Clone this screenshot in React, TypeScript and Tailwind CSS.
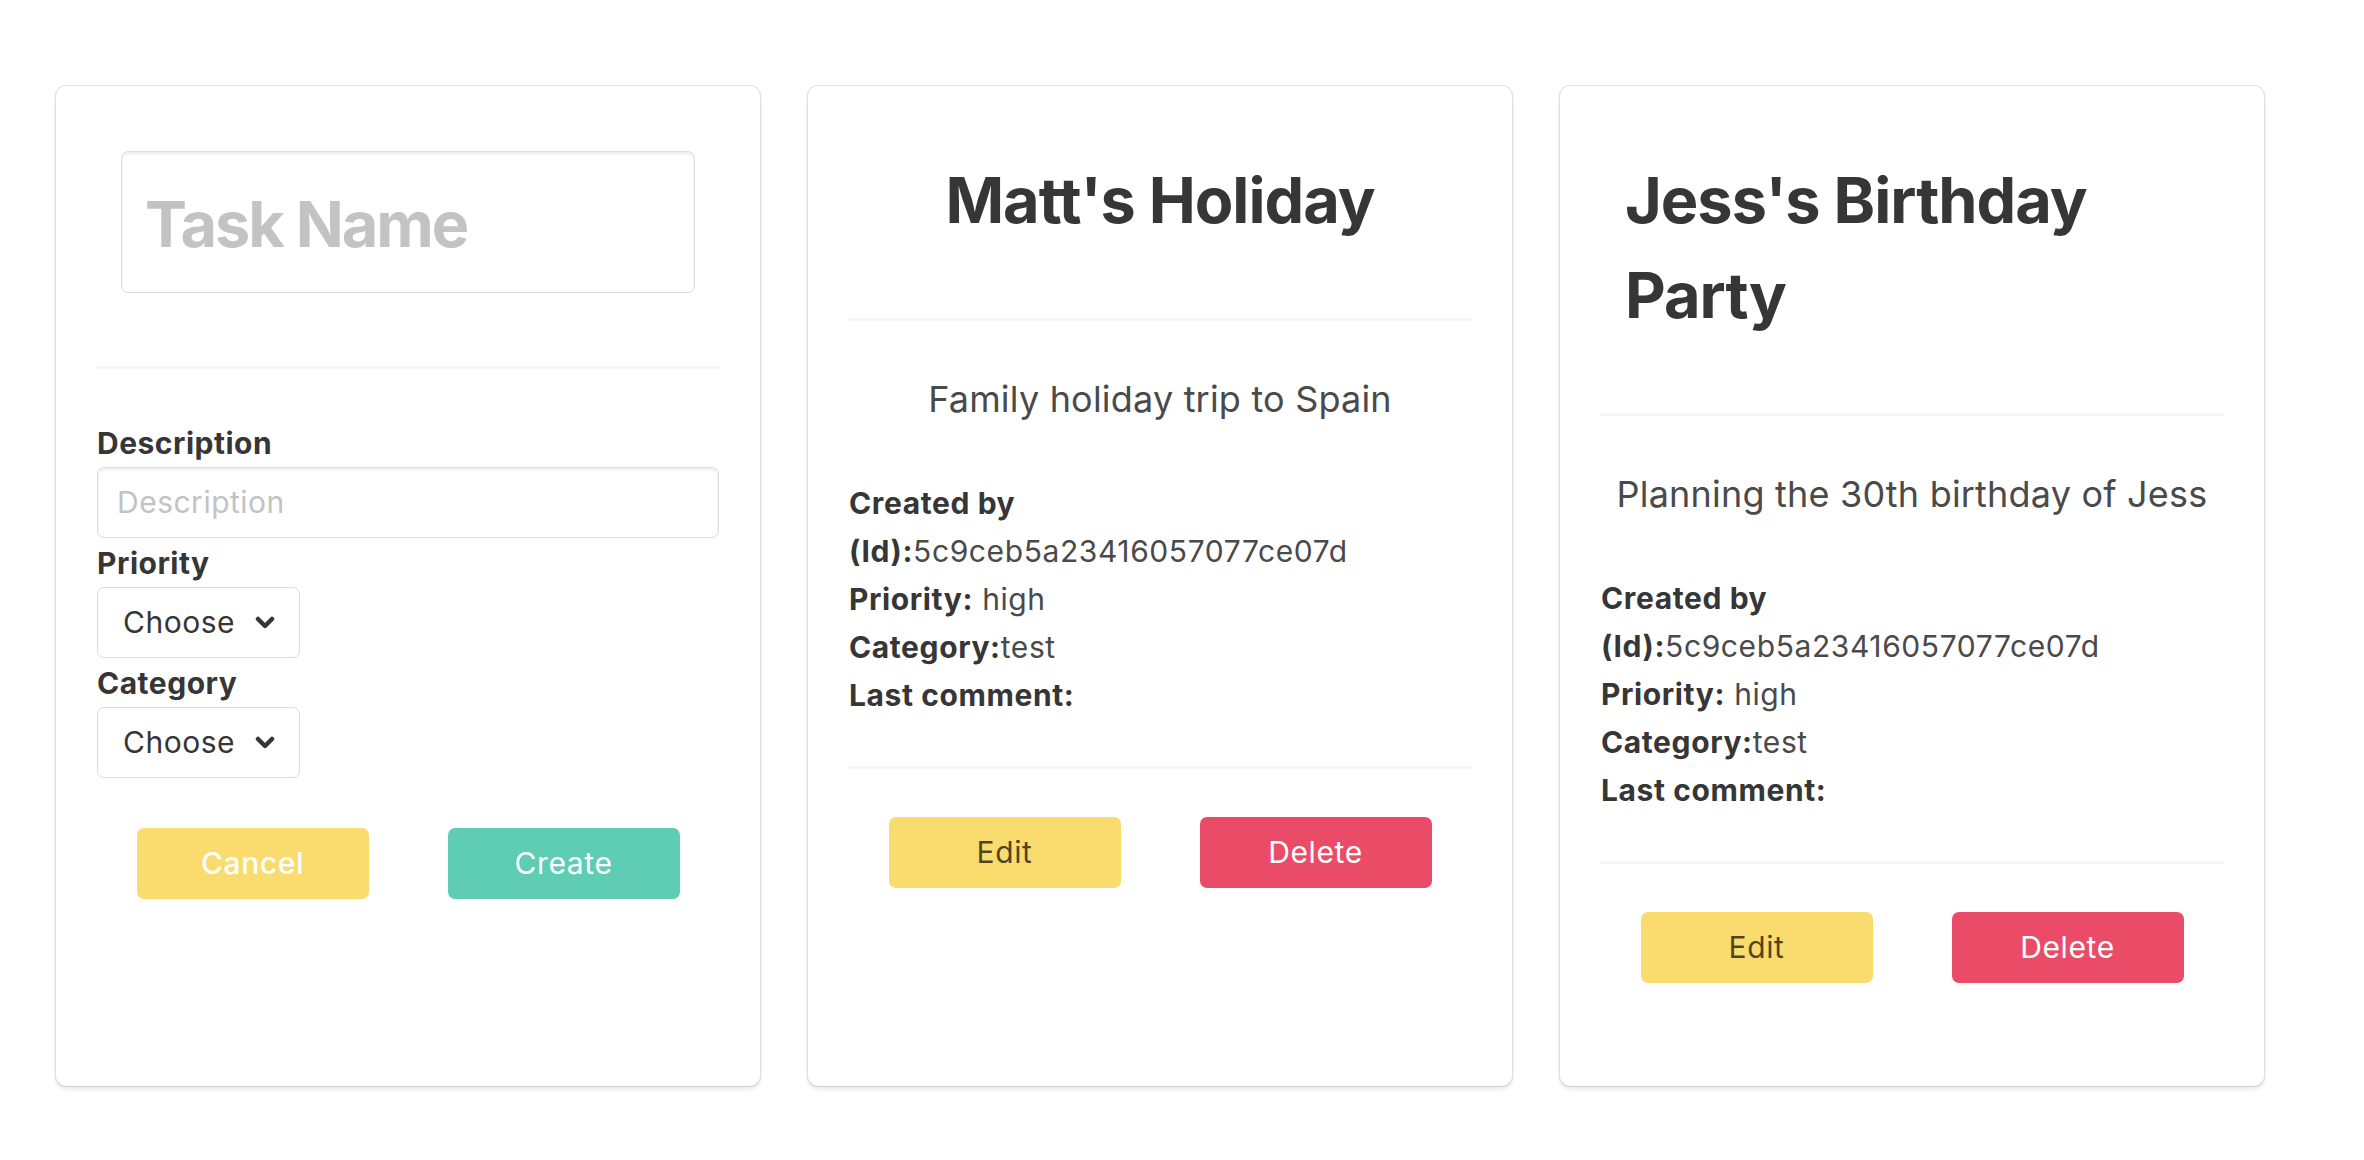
import React from "react";

const Chevron = () => (
  <svg width="20" height="14" viewBox="0 0 20 14" className="shrink-0">
    <path d="M3 3 L10 10 L17 3" fill="none" stroke="#363636" strokeWidth="4.5" strokeLinecap="round" strokeLinejoin="round" />
  </svg>
);

const Divider = ({ className = "" }: { className?: string }) => (
  <div className={"h-[3px] w-full bg-[#f5f5f5] " + className} />
);

const Card = ({ children }: { children: React.ReactNode }) => (
  <div className="w-[704px] h-[1000px] shrink-0 rounded-[10px] bg-white px-[41px] pt-[41px] shadow-[0_3px_5px_rgba(10,10,10,0.1),0_0_0_1px_rgba(10,10,10,0.1)] flex flex-col">
    {children}
  </div>
);

const Label = ({ children }: { children: React.ReactNode }) => (
  <div className="text-[30px] tracking-[0.5px] leading-[42px] font-bold text-[#363636] mb-[3px]">{children}</div>
);

const SelectBox = () => (
  <div className="w-[203px] h-[71px] rounded-[7px] border border-[#dbdbdb] bg-white flex items-center justify-between pl-[25px] pr-[24px] mb-[4px]">
    <span className="text-[30px] tracking-[0.5px] text-[#363636]">Choose</span>
    <Chevron />
  </div>
);

const Btn = ({ children, className }: { children: React.ReactNode; className: string }) => (
  <div className="flex justify-center">
    <button className={"w-[232px] h-[71px] rounded-[7px] text-[30px] tracking-[0.6px] flex items-center justify-center " + className}>
      {children}
    </button>
  </div>
);

const TaskCard = ({ title, desc }: { title: string; desc: string }) => (
  <Card>
    <div className="pt-[26px] px-[24px] flex justify-center">
      <h1 className="text-[63px] tracking-[-1px] leading-[95px] font-bold text-[#363636] text-left">{title}</h1>
    </div>
    <Divider className="mt-[70px]" />
    <p className="mt-[52px] text-[36px] tracking-[0.2px] leading-[52.5px] text-center text-[#4a4a4a]">{desc}</p>
    <div className="mt-[53px] text-[30px] tracking-[0.6px] leading-[48px] text-[#4a4a4a]">
      <div>
        <strong className="font-bold text-[#363636]">Created by</strong>
        <br />
        <strong className="font-bold text-[#363636]">(Id):</strong>5c9ceb5a23416057077ce07d
      </div>
      <div>
        <strong className="font-bold text-[#363636]">Priority:</strong> high
      </div>
      <div>
        <strong className="font-bold text-[#363636]">Category:</strong>test
      </div>
      <div>
        <strong className="font-bold text-[#363636]">Last comment:</strong>
      </div>
    </div>
    <Divider className="mt-[47px]" />
    <div className="mt-[48px] grid grid-cols-2">
      <Btn className="bg-[#fadb6e] text-black/70">Edit</Btn>
      <Btn className="bg-[#ea4c68] text-white">Delete</Btn>
    </div>
  </Card>
);

export default function App() {
  return (
    <div className="min-h-screen w-full bg-white font-['Inter',sans-serif] flex gap-[48px] pl-[56px] pt-[86px]">
      <Card>
        <div className="pt-[24px] px-[24px]">
          <div className="h-[142px] rounded-[7px] border border-[#dbdbdb] shadow-[inset_0_2px_3px_rgba(10,10,10,0.08)] flex items-center pl-[23px] pt-[5px]">
            <span className="text-[63px] tracking-[-2px] font-bold text-[#c3c3c3]">Task Name</span>
          </div>
        </div>
        <Divider className="mt-[73px]" />
        <div className="mt-[53px]">
          <Label>Description</Label>
          <div className="h-[71px] w-full rounded-[7px] border border-[#dbdbdb] shadow-[inset_0_2px_3px_rgba(10,10,10,0.08)] flex items-center pl-[19px] mb-[4px]">
            <span className="text-[30px] tracking-[0.5px] text-[#c3c3c3]">Description</span>
          </div>
          <Label>Priority</Label>
          <SelectBox />
          <Label>Category</Label>
          <SelectBox />
        </div>
        <div className="mt-[46px] grid grid-cols-2">
          <Btn className="bg-[#fadb6e] text-white font-medium">Cancel</Btn>
          <Btn className="bg-[#5ecdb4] text-white">Create</Btn>
        </div>
      </Card>
      <TaskCard title="Matt's Holiday" desc="Family holiday trip to Spain" />
      <TaskCard title="Jess's Birthday Party" desc="Planning the 30th birthday of Jess" />
    </div>
  );
}
